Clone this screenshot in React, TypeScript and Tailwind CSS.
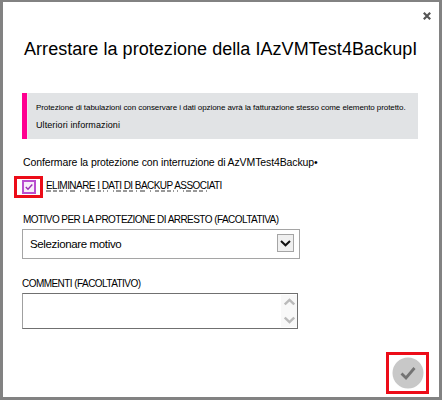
import type { ReactNode } from "react";

function Highlight({ className, children }: { className: string; children: ReactNode }) {
  return (
    <div className={`flex shrink-0 items-center justify-center border-[3px] border-[#ec0c18] ${className}`}>
      {children}
    </div>
  );
}

function Notice() {
  return (
    <div className="mt-[31px] flex h-[46px] w-[396px]">
      <div className="w-[5px] bg-[#ff0090]" />
      <div className="flex-1 border-l border-[#f4e6ee] bg-[#e1e3e5] pl-[8px] pt-[8px]">
        <p className="h-[17px] whitespace-nowrap text-[8px] leading-[13px] tracking-[-0.075px]">
          Protezione di tabulazioni con conservare i dati opzione avrà la fatturazione stesso come elemento protetto.
        </p>
        <p className="whitespace-nowrap text-[9px] leading-[14px] tracking-[0.09px]">Ulteriori informazioni</p>
      </div>
    </div>
  );
}

function DeleteOption() {
  return (
    <div className="-ml-[8px] mt-[6px] flex h-[22px] items-start">
      <Highlight className="h-[22px] w-[29px]">
        <div className="flex h-[14px] w-[14px] items-center justify-center border-2 border-[#b94fd0] bg-[#f8effa]">
          <svg className="h-[8px] w-[8px]" viewBox="0 0 8 8" fill="none" stroke="#9b2fb5" strokeWidth="1.4">
            <path d="M0.8 4 L3 6.3 L7.3 1.5" />
          </svg>
        </div>
      </Highlight>
      <div className="ml-[3px] flex flex-col pt-px">
        <span className="h-[13px] whitespace-nowrap text-[10px] leading-[18px] tracking-[-0.55px]">
          ELIMINARE I DATI DI BACKUP ASSOCIATI
        </span>
        <svg className="h-[2px] w-[163px]" viewBox="0 0 163 2" stroke="#333" fill="none">
          <path
            d="M0 1 H163"
            strokeWidth="1"
            strokeDasharray="5 2 4 2 4 3 1 3 5 5 1 4 4 2 4 2 4 2 1 3 1 5 1 2"
          />
        </svg>
      </div>
    </div>
  );
}

export default function App() {
  return (
    <div className="h-[400px] w-[442px] overflow-hidden border-b-[3px] border-l-[3px] border-r-[3px] border-t-2 border-[#828282] bg-white font-['Liberation_Sans',Arial,sans-serif] text-black">
      <div className="flex h-full flex-col pl-[19px]">
        <div className="flex h-[26px] justify-end pr-[8px] pt-[10px]">
          <svg className="h-[8px] w-[8px]" viewBox="0 0 8 8" stroke="#555" strokeWidth="2.2">
            <path d="M0.8 0.8 L7.2 7.2 M7.2 0.8 L0.8 7.2" />
          </svg>
        </div>
        <h1 className="ml-[2px] mt-[9px] h-[25px] whitespace-nowrap text-[18px] leading-[25px] tracking-[0.045px]">
          <span>Arrestare la protezione della IAzVMTest4BackupI</span>
        </h1>
        <Notice />
        <p className="ml-px mt-[16px] h-[15px] whitespace-nowrap text-[10.5px] leading-[15px] tracking-[-0.11px]">
          <span>Confermare la protezione con interruzione di AzVMTest4Backup•</span>
        </p>
        <DeleteOption />
        <label className="ml-px mt-[15px] h-[14px] whitespace-nowrap text-[10px] leading-[14px] tracking-[-0.55px]">
          <span>MOTIVO PER LA PROTEZIONE DI ARRESTO (FACOLTATIVA)</span>
        </label>
        <div className="mt-[2px] flex h-[30px] w-[278px] justify-between border border-[#a5a5a5] pl-[7px] pr-[5px] pt-[4px]">
          <span className="whitespace-nowrap text-[11.5px] leading-[21px] tracking-[-0.36px]">Selezionare motivo</span>
          <div className="flex h-[18px] w-[17px] items-center justify-center border border-[#a5a5a5] bg-[#f0f0f0]">
            <svg className="h-[7px] w-[11px]" viewBox="0 0 11 7" fill="none" stroke="#111" strokeWidth="2">
              <path d="M1 1 L5.5 5.3 L10 1" />
            </svg>
          </div>
        </div>
        <label className="mt-[18px] h-[14px] whitespace-nowrap text-[10px] leading-[14px] tracking-[-0.55px]">
          <span>COMMENTI (FACOLTATIVO)</span>
        </label>
        <div className="mt-[2px] flex h-[36px] w-[276px] justify-end border border-[#707070] border-l-[#a0a0a0]">
          <div className="my-px flex w-[16px] flex-col items-center justify-between bg-[#f8f8f8] py-[3px]">
            <svg className="h-[8px] w-[11px]" viewBox="0 0 11 8" fill="none" stroke="#bababa" strokeWidth="2.4">
              <path d="M0.8 6.5 L5.5 2 L10.2 6.5" />
            </svg>
            <svg className="h-[8px] w-[11px]" viewBox="0 0 11 8" fill="none" stroke="#bababa" strokeWidth="2.4">
              <path d="M0.8 1.5 L5.5 6 L10.2 1.5" />
            </svg>
          </div>
        </div>
        <div className="mt-[23px] flex justify-end pr-[10px]">
          <Highlight className="h-[42px] w-[43px]">
            <svg className="h-[32px] w-[32px]" viewBox="0 0 32 32" fill="none">
              <circle cx="16" cy="16" r="15.5" fill="#c8c8c8" />
              <path d="M9.5 16.5 L14 21 L22.5 11" stroke="#737373" strokeWidth="2.8" />
            </svg>
          </Highlight>
        </div>
      </div>
    </div>
  );
}
